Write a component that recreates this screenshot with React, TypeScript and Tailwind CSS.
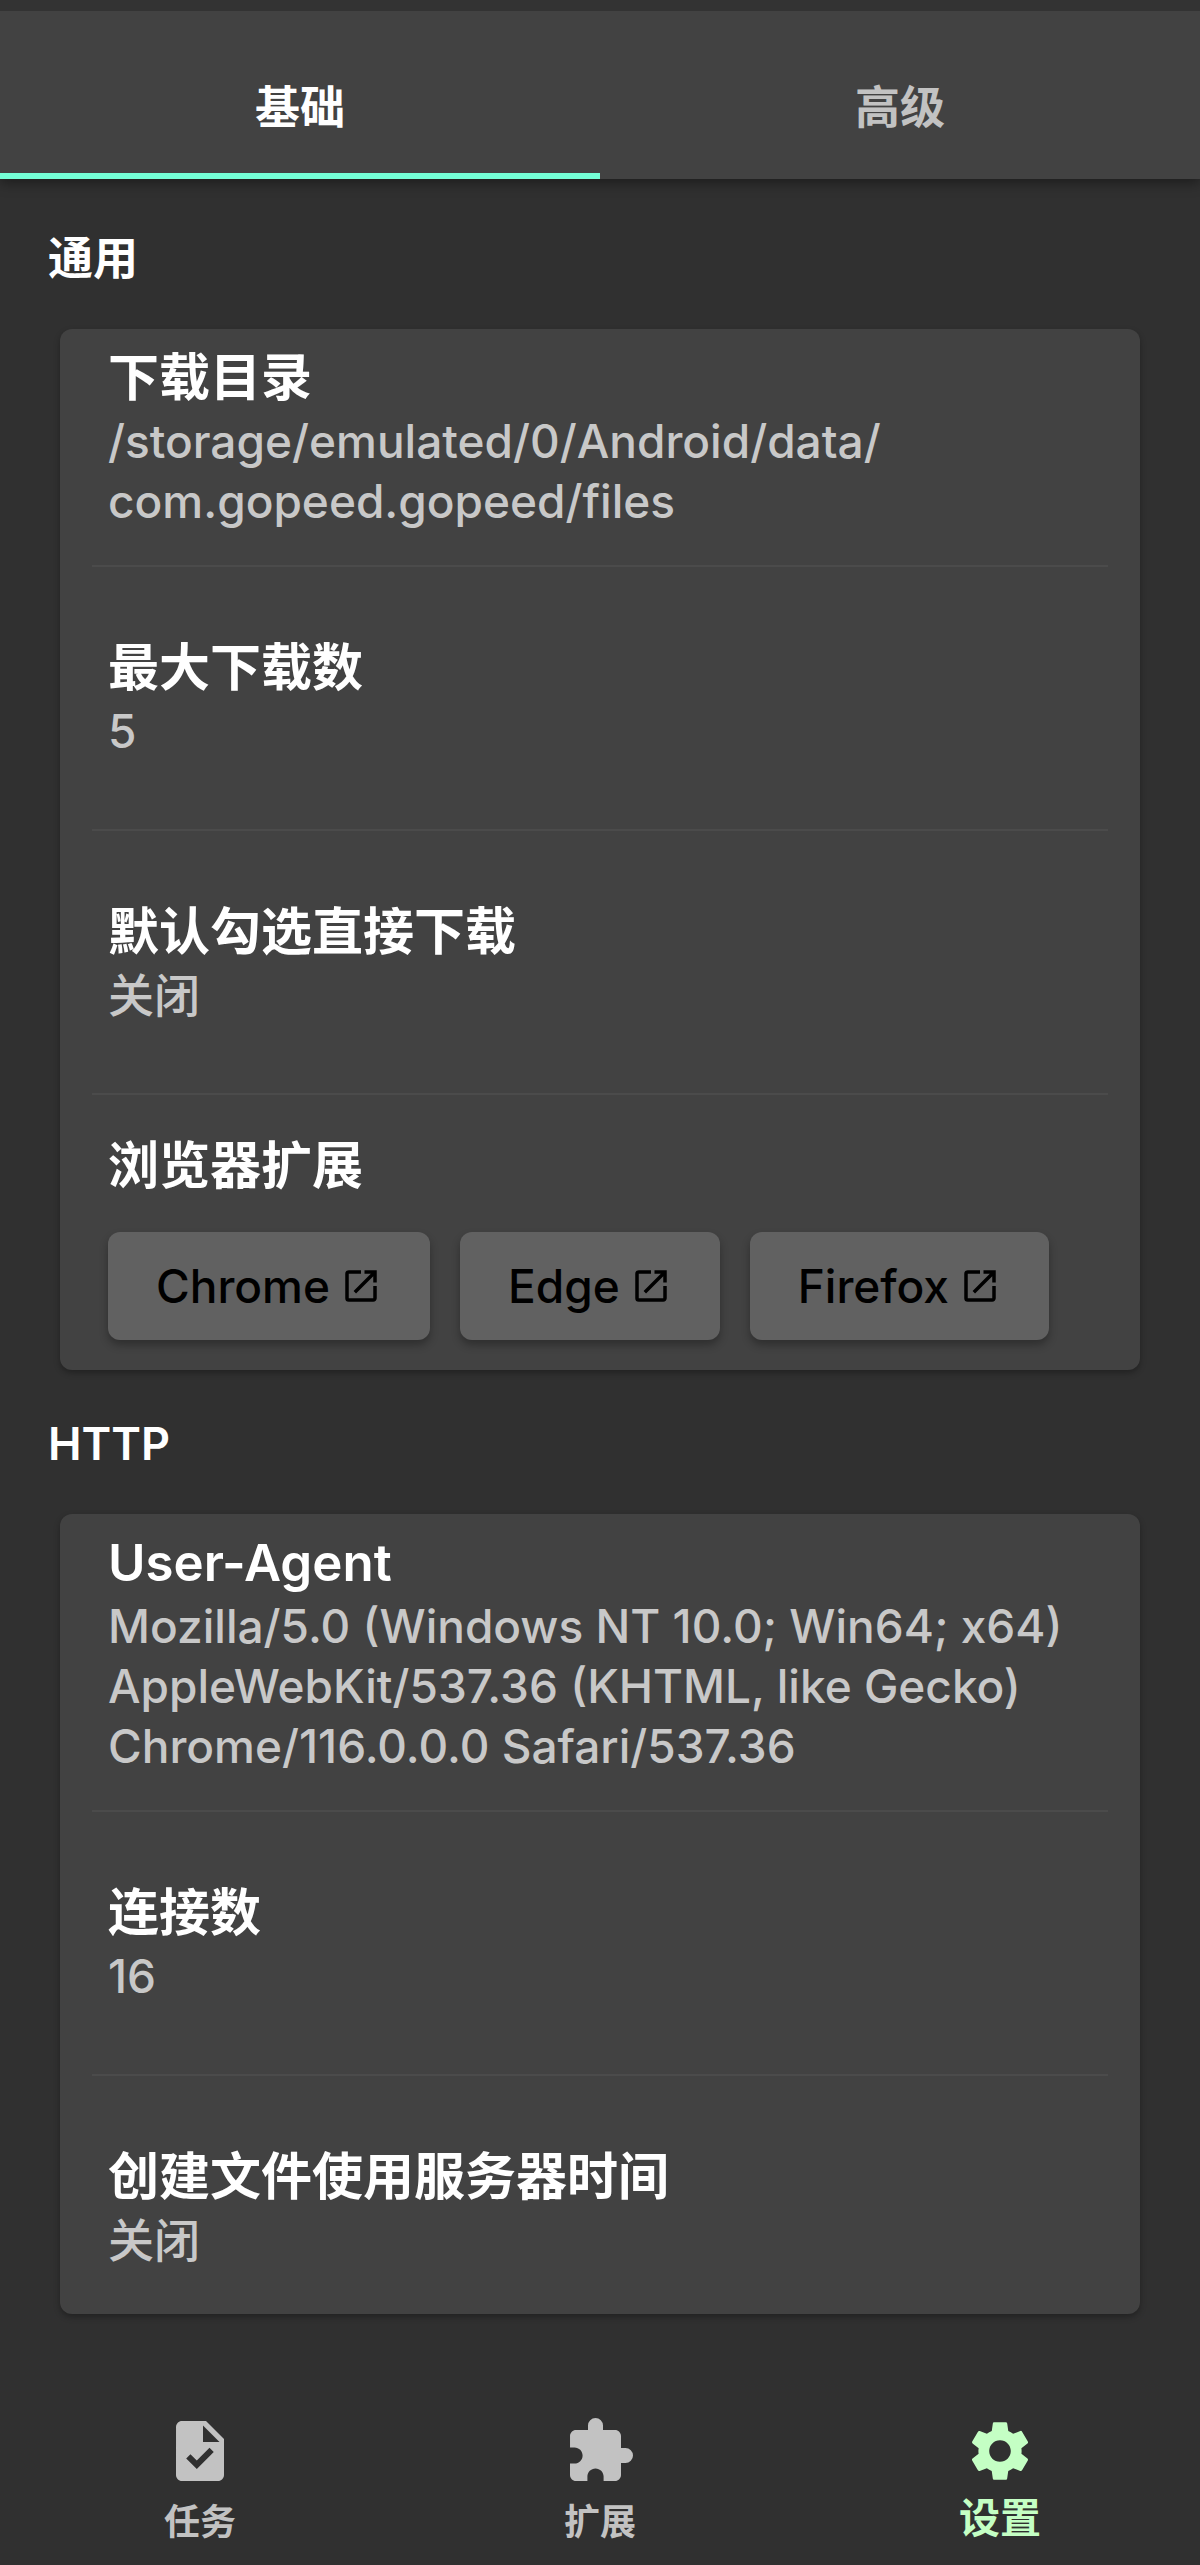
import React, { Fragment, useState } from "react";
import { MdExtension, MdOpenInNew, MdSettings, MdTask } from "react-icons/md";

const tabs = ["基础", "高级"];

const navItems = [
  { label: "任务", icon: MdTask },
  { label: "扩展", icon: MdExtension },
  { label: "设置", icon: MdSettings },
];

const browsers = ["Chrome", "Edge", "Firefox"];

const downloadDir = "/storage/emulated/0/Android/data/com.gopeed.gopeed/files";

const userAgent =
  "Mozilla/5.0 (Windows NT 10.0; Win64; x64) AppleWebKit/537.36 (KHTML, like Gecko) Chrome/116.0.0.0 Safari/537.36";

const Divider = () => <hr className="mx-8 border-0 h-[2px] bg-[#4b4b4b]" />;

// let long paths wrap after a slash
const Path = ({ path }: { path: string }) => (
  <>
    {path.split("/").map((part, i) => (
      <Fragment key={i}>
        {i > 0 && "/"}
        {i > 0 && <wbr />}
        {part}
      </Fragment>
    ))}
  </>
);

const SettingItem = ({
  title,
  value,
  className,
}: {
  title: string;
  value: React.ReactNode;
  className: string;
}) => (
  <div className={`px-12 ${className}`}>
    <h3 className="text-[51px] leading-[66px] font-semibold text-white">{title}</h3>
    <p className="text-[46px] leading-[60px] text-[#c8c8c8]">{value}</p>
  </div>
);

const Section = ({
  title,
  children,
}: {
  title: string;
  children: React.ReactNode;
}) => (
  <section>
    <h2 className="flex items-center h-36 pt-1 px-12 text-[45px] font-semibold text-white">
      {title}
    </h2>
    <div className="mx-15 rounded-xl bg-[#424242] shadow-[0_3px_6px_rgba(0,0,0,0.3)]">
      {children}
    </div>
  </section>
);

const App = () => {
  const [activeTab, setActiveTab] = useState("基础");
  const [activeNav, setActiveNav] = useState("设置");

  return (
    <div className="flex flex-col min-h-screen bg-[#303030] font-medium font-['Inter','Noto_Sans_CJK_SC',sans-serif]">
      <header className="border-t-[11px] border-[#333333] bg-[#424242] shadow-[0_4px_12px_rgba(0,0,0,0.4)]">
        <div className="flex" role="tablist">
          {tabs.map((tab) => (
            <button
              key={tab}
              role="tab"
              aria-selected={activeTab === tab}
              onClick={() => setActiveTab(tab)}
              className={`flex-1 h-42 pt-11 pb-3 text-[45px] font-semibold border-b-6 ${
                activeTab === tab
                  ? "text-white border-[#74ffd6]"
                  : "text-[#c2c2c2] border-transparent"
              }`}
            >
              {tab}
            </button>
          ))}
        </div>
      </header>

      <main className="pt-1.5">
        <Section title="通用">
          <SettingItem
            title="下载目录"
            value={<Path path={downloadDir} />}
            className="pt-4 pb-[34px]"
          />
          <Divider />
          <SettingItem title="最大下载数" value="5" className="pt-[68px] pb-[68px]" />
          <Divider />
          <SettingItem
            title="默认勾选直接下载"
            value="关闭"
            className="pt-[68px] pb-[68px]"
          />
          <Divider />
          <div className="px-12 pt-[38px] pb-[30px]">
            <h3 className="text-[51px] leading-[66px] font-semibold text-white">
              浏览器扩展
            </h3>
            <div className="flex flex-wrap gap-[30px] pt-[33px]">
              {browsers.map((browser) => (
                <button
                  key={browser}
                  className="flex items-center gap-2.5 h-27 px-12 rounded-xl bg-[#616161] text-[46px] text-black shadow-[0_5px_8px_rgba(0,0,0,0.3)]"
                >
                  {browser}
                  <MdOpenInNew className="size-[42px]" />
                </button>
              ))}
            </div>
          </div>
        </Section>

        <Section title="HTTP">
          <SettingItem
            title="User-Agent"
            value={userAgent}
            className="pt-4 pb-[34px]"
          />
          <Divider />
          <SettingItem title="连接数" value="16" className="pt-[68px] pb-[68px]" />
          <Divider />
          <SettingItem
            title="创建文件使用服务器时间"
            value="关闭"
            className="pt-[68px] pb-11"
          />
        </Section>
      </main>

      <nav className="flex h-42 mt-auto">
        {navItems.map(({ label, icon: Icon }) => (
          <button
            key={label}
            onClick={() => setActiveNav(label)}
            className={`flex flex-1 flex-col items-center gap-[7px] pt-[18px] font-semibold ${
              activeNav === label
                ? "text-[41px] leading-12 text-[#c4ffc4]"
                : "text-[36px] leading-14 text-[#c2c2c2]"
            }`}
          >
            <Icon className="size-18" />
            {label}
          </button>
        ))}
      </nav>
    </div>
  );
};

export default App;
